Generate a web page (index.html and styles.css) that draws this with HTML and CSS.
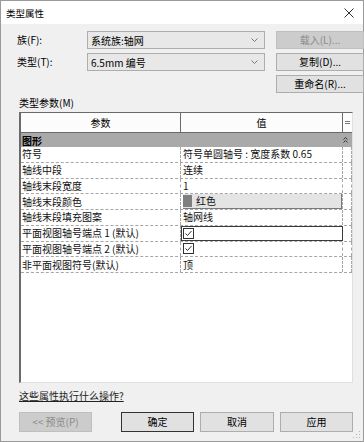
FILE: index.html
```html
<!DOCTYPE html>
<html lang="zh-CN">
<head>
    <meta charset="UTF-8">
    <meta name="viewport" content="width=device-width, initial-scale=1.0">
    <title>类型属性</title>
    <link rel="stylesheet" href="styles.css">
</head>
<body>
    <div class="window">
        <div class="titlebar">
            <div class="title">类型属性</div>
            <svg class="close" width="10" height="10" viewBox="0 0 10 10"><path d="M0.5 0.5L9.5 9.5M9.5 0.5L0.5 9.5"/></svg>
        </div>
        <div class="content">
            <div class="top">
                <div class="label">族(F):</div>
                <div class="combo">
                    <span>系统族:轴网</span>
                    <svg class="chevron" width="7" height="4" viewBox="0 0 7 4"><path d="M0.5 0.5L3.5 3.5L6.5 0.5"/></svg>
                </div>
                <button type="button" class="btn" disabled>载入(L)...</button>
                <div class="label">类型(T):</div>
                <div class="combo">
                    <span>6.5mm 编号</span>
                    <svg class="chevron" width="7" height="4" viewBox="0 0 7 4"><path d="M0.5 0.5L3.5 3.5L6.5 0.5"/></svg>
                </div>
                <button type="button" class="btn">复制(D)...</button>
                <button type="button" class="btn rename">重命名(R)...</button>
            </div>

            <div class="section-label">类型参数(M)</div>

            <div class="grid">
                <div class="grid-head">
                    <div class="hcell">参数</div>
                    <div class="hcell">值</div>
                    <div class="hcell tiny">
                        <svg width="5" height="5" viewBox="0 0 5 5"><path d="M0 1.5H5M0 3.5H5"/></svg>
                    </div>
                </div>
                <div class="group">
                    <span>图形</span>
                    <svg width="5" height="6" viewBox="0 0 5 6"><path d="M0.5 2.5L2.5 0.5L4.5 2.5M0.5 5.5L2.5 3.5L4.5 5.5"/></svg>
                </div>
                <div class="row"><div class="cell">符号</div><div class="cell val">符号单圆轴号 : 宽度系数 0.65</div><div class="cell"></div></div>
                <div class="row"><div class="cell">轴线中段</div><div class="cell val">连续</div><div class="cell"></div></div>
                <div class="row"><div class="cell">轴线末段宽度</div><div class="cell val">1</div><div class="cell"></div></div>
                <div class="row">
                    <div class="cell">轴线末段颜色</div>
                    <div class="cell">
                        <div class="color-box"><span class="swatch"></span>红色</div>
                    </div>
                    <div class="cell"></div>
                </div>
                <div class="row"><div class="cell">轴线末段填充图案</div><div class="cell val">轴网线</div><div class="cell"></div></div>
                <div class="row">
                    <div class="cell">平面视图轴号端点 1 (默认)</div>
                    <div class="cell val focus">
                        <svg class="check" width="11" height="11" viewBox="0 0 11 11"><rect x="0.5" y="0.5" width="10" height="10"/><path d="M2.5 5.5L4.5 7.5L8.5 3"/></svg>
                    </div>
                    <div class="cell"></div>
                </div>
                <div class="row">
                    <div class="cell">平面视图轴号端点 2 (默认)</div>
                    <div class="cell val">
                        <svg class="check" width="11" height="11" viewBox="0 0 11 11"><rect x="0.5" y="0.5" width="10" height="10"/><path d="M2.5 5.5L4.5 7.5L8.5 3"/></svg>
                    </div>
                    <div class="cell"></div>
                </div>
                <div class="row"><div class="cell">非平面视图符号(默认)</div><div class="cell val">顶</div><div class="cell"></div></div>
            </div>

            <a class="help" href="#">这些属性执行什么操作?</a>

            <div class="footer">
                <button type="button" class="btn wide" disabled>&lt;&lt; 预览(P)</button>
                <div class="footer-right">
                    <button type="button" class="btn wide default">确定</button>
                    <button type="button" class="btn wide">取消</button>
                    <button type="button" class="btn wide">应用</button>
                </div>
            </div>
        </div>
        <svg class="grip" width="8" height="8" viewBox="0 0 8 8">
            <rect x="6" y="0" width="1" height="1"/><rect x="3" y="3" width="1" height="1"/><rect x="6" y="3" width="1" height="1"/>
            <rect x="0" y="6" width="1" height="1"/><rect x="3" y="6" width="1" height="1"/><rect x="6" y="6" width="1" height="1"/>
        </svg>
    </div>
</body>
</html>
```

FILE: styles.css
```css
* {
    box-sizing: border-box;
    margin: 0;
    padding: 0;
    font-family: "Noto Sans CJK SC", "Noto Sans", sans-serif;
}
body {
    background: #ffffff;
}
.window {
    position: relative;
    width: 364px;
    height: 442px;
    border: 1px solid #9a9a9a;
    background: #f0f0f0;
    display: flex;
    flex-direction: column;
}
.titlebar {
    height: 23px;
    background: #ffffff;
    display: flex;
    align-items: center;
    justify-content: space-between;
    padding: 0 9px 0 5px;
}
.title {
    font-size: 9.5px;
    color: #000000;
}
.close path {
    stroke: #333333;
    stroke-width: 1;
    fill: none;
}
.content {
    flex: 1;
    padding: 7px 10px 0 18px;
    display: flex;
    flex-direction: column;
}
.top {
    display: grid;
    grid-template-columns: 57px 178px 88px;
    grid-template-rows: 18px 18px 18px;
    column-gap: 11px;
    row-gap: 4px;
}
.label {
    font-size: 10px;
    line-height: 18px;
    margin-left: -2px;
    color: #000000;
}
.combo {
    background: #e8e8e8;
    border: 1px solid #adadad;
    display: flex;
    align-items: center;
    justify-content: space-between;
    padding: 0 6px 0 3px;
    font-size: 10px;
    color: #000000;
}
.chevron path {
    stroke: #7a7a7a;
    stroke-width: 1;
    fill: none;
}
.btn {
    background: #e1e1e1;
    border: 1px solid #adadad;
    font-size: 10px;
    color: #000000;
    height: 18px;
    line-height: 16px;
}
.btn:disabled {
    background: #cccccc;
    border-color: #bfbfbf;
    color: #8a8a8a;
}
.rename {
    grid-column: 3;
    grid-row: 3;
}
.section-label {
    font-size: 10px;
    line-height: 14px;
    margin-top: 3px;
    margin-bottom: 2px;
    color: #000000;
}
.grid {
    height: 271px;
    background: #ffffff;
    border-top: 1px solid #6a6a6a;
    border-left: 2px solid #6a6a6a;
    border-right: 1px solid #e0e0e0;
    border-bottom: 1px solid #e0e0e0;
    display: flex;
    flex-direction: column;
}
.grid-head {
    display: grid;
    grid-template-columns: 160px 162px 1fr;
    height: 20px;
    border-bottom: 1px solid #6a6a6a;
    background: #fcfcfc;
}
.hcell {
    border-right: 1px solid #6a6a6a;
    display: flex;
    align-items: center;
    justify-content: center;
    font-size: 10px;
    color: #000000;
}
.hcell.tiny {
    border-right: none;
}
.hcell path {
    stroke: #7a7a7a;
    stroke-width: 1;
}
.group {
    height: 14px;
    background: #a9a9a9;
    display: flex;
    align-items: center;
    justify-content: space-between;
    padding: 0 4px 0 1px;
    font-size: 10px;
    font-weight: bold;
    color: #000000;
}
.group path {
    stroke: #333333;
    stroke-width: 1;
    fill: none;
}
.row {
    display: grid;
    grid-template-columns: 160px 162px 1fr;
    height: 15.75px;
    border-bottom: 1px dashed #a6a6a6;
}
.cell {
    border-right: 1px dashed #a6a6a6;
    font-size: 10px;
    line-height: 14px;
    color: #111111;
    padding-left: 1px;
    white-space: nowrap;
    display: flex;
    align-items: center;
}
.cell.val {
    padding-left: 2px;
}
.cell.focus {
    border: 1px solid #3a3a3a;
    padding-left: 1px;
}
.color-box {
    flex: 1;
    height: 100%;
    margin-left: 1px;
    background: #e4e4e4;
    border-right: 1px solid #7a7a7a;
    border-bottom: 1px solid #7a7a7a;
    display: flex;
    align-items: center;
    gap: 4px;
}
.swatch {
    width: 9px;
    height: 12px;
    background: #7f7f7f;
}
.check rect {
    fill: #ffffff;
    stroke: #333333;
}
.check path {
    fill: none;
    stroke: #333333;
    stroke-width: 1;
}
.help {
    margin-top: 6px;
    font-size: 10px;
    line-height: 14px;
    color: #222222;
    align-self: flex-start;
}
.footer {
    margin-top: 9px;
    display: flex;
    justify-content: space-between;
}
.footer-right {
    display: flex;
    gap: 6px;
}
.btn.wide {
    width: 74px;
    height: 20px;
    line-height: 18px;
}
.btn.wide:first-child {
    width: 73px;
}
.footer-right .btn.wide:last-child {
    width: 73px;
}
.btn.default {
    border-color: #333333;
}
.grip {
    position: absolute;
    right: 2px;
    bottom: 2px;
}
.grip rect {
    fill: #b4b4b4;
}
```
